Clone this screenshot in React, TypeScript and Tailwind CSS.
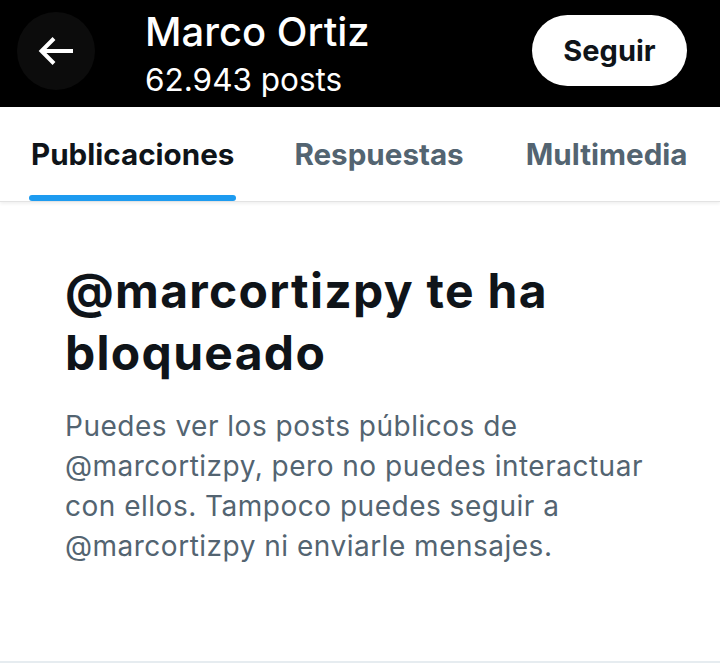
import React from "react";

export default function App() {
  return (
    <div className="w-[720px] h-[668px] bg-white overflow-hidden flex flex-col" style={{ fontFamily: "Inter, Roboto, 'Liberation Sans', sans-serif" }}>
      <div className="h-[107px] bg-black flex items-start pl-[17px] pr-[33px] shrink-0">
        <div className="mt-[12px] w-[78px] h-[78px] rounded-full bg-[#0c0c0c] flex items-center justify-center">
          <svg width="36" height="30" viewBox="0 0 36 30" fill="none" stroke="white" strokeWidth="4" strokeLinecap="butt" strokeLinejoin="miter">
            <path d="M4 15H35M16 2.5 3.5 15 16 27.5" />
          </svg>
        </div>
        <div className="ml-[50px] mt-[10px] flex flex-col text-white">
          <div className="text-[40px] leading-[44px] font-medium">Marco Ortiz</div>
          <div className="mt-[8px] text-[31.5px] leading-[36px]">62.943 posts</div>
        </div>
        <div className="ml-auto mt-[15px] h-[71px] w-[155px] rounded-full bg-white text-[#0f1419] flex items-center justify-center text-[29px] font-bold">Seguir</div>
      </div>
      <div className="h-[95px] flex items-stretch shrink-0 border-b border-[#e3e3e3] shadow-[0_2px_3px_rgba(0,0,0,0.06)]">
        <div className="ml-[29px] relative flex items-center">
          <span className="text-[29.6px] font-bold text-[#0f1419] px-[2px]">Publicaciones</span>
          <div className="absolute bottom-0 left-0 right-0 h-[6px] rounded-full bg-[#1d9bf0]"></div>
        </div>
        <div className="ml-[58px] flex items-center text-[29.6px] font-bold text-[#536471]">Respuestas</div>
        <div className="ml-[62px] flex items-center text-[29.6px] font-bold text-[#536471]">Multimedia</div>
      </div>
      <div className="pl-[65px] pr-[20px] pt-[58px] flex-1 border-b-2 border-[#e6ecf0]">
        <div className="text-[48px] leading-[62px] font-bold text-[#0f1419] tracking-[1.3px]">@marcortizpy te ha<br />bloqueado</div>
        <div className="mt-[22px] text-[28px] leading-[40px] text-[#536471] tracking-[0.5px]">
          Puedes ver los posts públicos de<br />@marcortizpy, pero no puedes interactuar<br />con ellos. Tampoco puedes seguir a<br />@marcortizpy ni enviarle mensajes.
        </div>
      </div>
      <div className="h-[5px]"></div>
    </div>
  );
}
